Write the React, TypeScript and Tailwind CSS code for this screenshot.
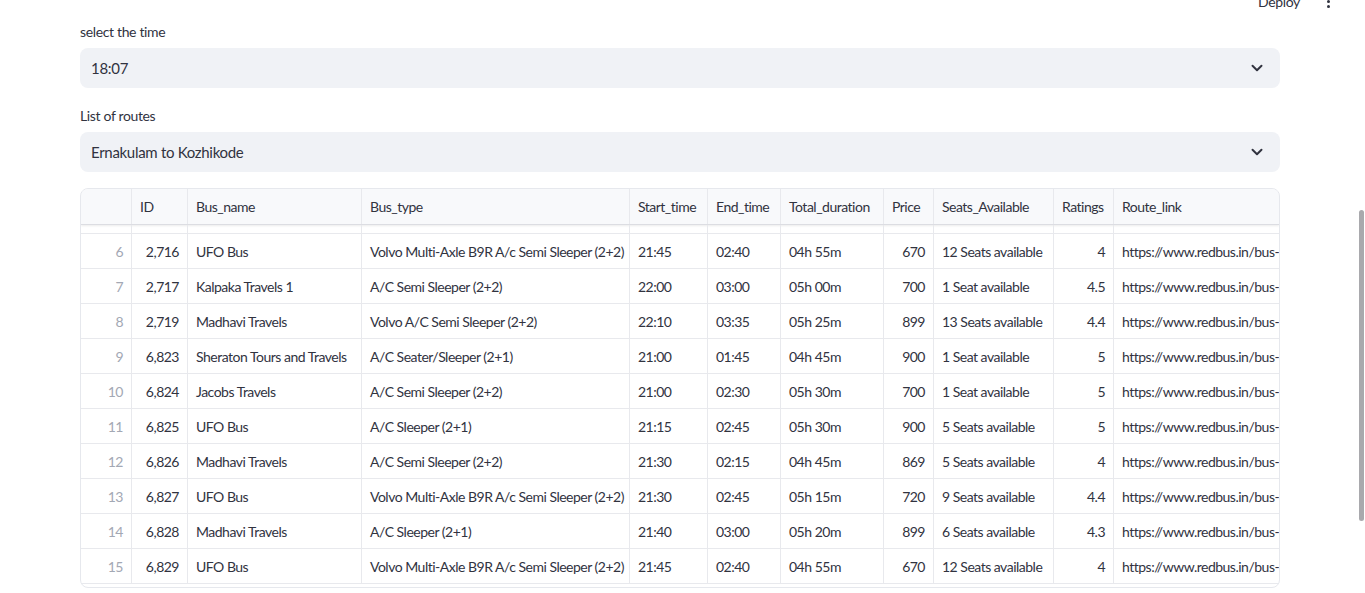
import { ChevronDown } from "lucide-react";

type Row = {
  idx: number;
  id: string;
  name: string;
  type: string;
  start: string;
  end: string;
  dur: string;
  price: string;
  seats: string;
  rating: string;
};

const rows: Row[] = [
  { idx: 6, id: "2,716", name: "UFO Bus", type: "Volvo Multi-Axle B9R A/c Semi Sleeper (2+2)", start: "21:45", end: "02:40", dur: "04h 55m", price: "670", seats: "12 Seats available", rating: "4" },
  { idx: 7, id: "2,717", name: "Kalpaka Travels 1", type: "A/C Semi Sleeper (2+2)", start: "22:00", end: "03:00", dur: "05h 00m", price: "700", seats: "1 Seat available", rating: "4.5" },
  { idx: 8, id: "2,719", name: "Madhavi Travels", type: "Volvo A/C Semi Sleeper (2+2)", start: "22:10", end: "03:35", dur: "05h 25m", price: "899", seats: "13 Seats available", rating: "4.4" },
  { idx: 9, id: "6,823", name: "Sheraton Tours and Travels", type: "A/C Seater/Sleeper (2+1)", start: "21:00", end: "01:45", dur: "04h 45m", price: "900", seats: "1 Seat available", rating: "5" },
  { idx: 10, id: "6,824", name: "Jacobs Travels", type: "A/C Semi Sleeper (2+2)", start: "21:00", end: "02:30", dur: "05h 30m", price: "700", seats: "1 Seat available", rating: "5" },
  { idx: 11, id: "6,825", name: "UFO Bus", type: "A/C Sleeper (2+1)", start: "21:15", end: "02:45", dur: "05h 30m", price: "900", seats: "5 Seats available", rating: "5" },
  { idx: 12, id: "6,826", name: "Madhavi Travels", type: "A/C Semi Sleeper (2+2)", start: "21:30", end: "02:15", dur: "04h 45m", price: "869", seats: "5 Seats available", rating: "4" },
  { idx: 13, id: "6,827", name: "UFO Bus", type: "Volvo Multi-Axle B9R A/c Semi Sleeper (2+2)", start: "21:30", end: "02:45", dur: "05h 15m", price: "720", seats: "9 Seats available", rating: "4.4" },
  { idx: 14, id: "6,828", name: "Madhavi Travels", type: "A/C Sleeper (2+1)", start: "21:40", end: "03:00", dur: "05h 20m", price: "899", seats: "6 Seats available", rating: "4.3" },
  { idx: 15, id: "6,829", name: "UFO Bus", type: "Volvo Multi-Axle B9R A/c Semi Sleeper (2+2)", start: "21:45", end: "02:40", dur: "04h 55m", price: "670", seats: "12 Seats available", rating: "4" },
];

const cols = "grid grid-cols-[51px_56px_174px_268px_78px_73px_103px_50px_120px_60px_200px]";

function Select({ value }: { value: string }) {
  return (
    <div className="flex h-10 items-center justify-between rounded-lg bg-[#f0f2f6] pl-[11px] pr-[14px] text-[15px] tracking-[-0.3px] text-[#31333f]">
      <span>{value}</span>
      <ChevronDown size={18} strokeWidth={2.6} className="text-[#31333f]" />
    </div>
  );
}

function Cell({ children, right, muted }: { children?: React.ReactNode; right?: boolean; muted?: boolean }) {
  return (
    <div
      className={`flex items-center overflow-hidden whitespace-nowrap border-r border-[#e8e9ed] px-2 ${right ? "justify-end" : ""} ${muted ? "text-[#a3a8b4]" : "text-[#31333f]"}`}
    >
      {children}
    </div>
  );
}

export default function App() {
  return (
    <div className="relative h-[593px] w-[1365px] overflow-hidden bg-white font-['Lato',sans-serif] text-[14px] tracking-[-0.35px] text-[#31333f]">
      <div className="absolute right-[35px] top-[-9px] flex items-center gap-[27px] text-[14px] text-[#31333f]">
        <span>Deploy</span>
        <span className="flex flex-col items-center gap-[2px]">
          <span className="h-[3px] w-[3px] rounded-full bg-[#31333f]" />
          <span className="h-[3px] w-[3px] rounded-full bg-[#31333f]" />
          <span className="h-[3px] w-[3px] rounded-full bg-[#31333f]" />
        </span>
      </div>

      <div className="absolute right-[1px] top-[210px] h-[311px] w-[5px] rounded-full bg-[#a9a9ad]" />

      <div className="ml-[80px] flex w-[1200px] flex-col pt-[22px]">
        <label className="mb-[6px] h-5 leading-5">select the time</label>
        <Select value="18:07" />
        <label className="mb-[6px] mt-[18px] h-5 leading-5">List of routes</label>
        <Select value="Ernakulam to Kozhikode" />

        <div className="mt-4 h-[400px] overflow-hidden rounded-lg border border-[#e6e8ed] tracking-[-0.5px]">
          <div className={`${cols} h-[36px] border-b border-[#dcdde2] bg-[#f8f9fb] text-[#878b98] shadow-[0_1px_2px_rgba(0,0,0,0.08)]`}>
            <Cell />
            <Cell>ID</Cell>
            <Cell>Bus_name</Cell>
            <Cell>Bus_type</Cell>
            <Cell>Start_time</Cell>
            <Cell>End_time</Cell>
            <Cell>Total_duration</Cell>
            <Cell>Price</Cell>
            <Cell>Seats_Available</Cell>
            <Cell>Ratings</Cell>
            <Cell>Route_link</Cell>
          </div>
          <div className={`${cols} h-[9px] border-b border-[#e8e9ed]`}>
            {Array.from({ length: 11 }).map((_, i) => (
              <Cell key={i} />
            ))}
          </div>
          {rows.map((r) => (
            <div key={r.idx} className={`${cols} h-[35px] border-b border-[#e8e9ed]`}>
              <Cell right muted>{r.idx}</Cell>
              <Cell right>{r.id}</Cell>
              <Cell>{r.name}</Cell>
              <Cell>{r.type}</Cell>
              <Cell>{r.start}</Cell>
              <Cell>{r.end}</Cell>
              <Cell>{r.dur}</Cell>
              <Cell right>{r.price}</Cell>
              <Cell>{r.seats}</Cell>
              <Cell right>{r.rating}</Cell>
              <Cell>https://www.redbus.in/bus-tickets/ernakulam-to-kozhikode</Cell>
            </div>
          ))}
        </div>
      </div>
    </div>
  );
}
